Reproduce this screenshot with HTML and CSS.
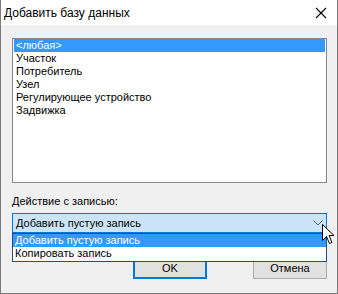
FILE: index.html
```html
<!DOCTYPE html>
<html>
<head>
<meta charset="utf-8">
<link rel="stylesheet" href="styles.css">
</head>
<body>
<div class="window">
  <div class="titlebar">
    <span class="title">Добавить базу данных</span>
    <svg class="close" width="12" height="12" viewBox="0 0 12 12"><path d="M1 1 L11 11 M11 1 L1 11" stroke="#000" stroke-width="1.1" fill="none"/></svg>
  </div>
  <div class="content">
    <div class="listbox">
      <div class="item selected">&lt;любая&gt;</div>
      <div class="item">Участок</div>
      <div class="item">Потребитель</div>
      <div class="item">Узел</div>
      <div class="item">Регулирующее устройство</div>
      <div class="item">Задвижка</div>
    </div>
    <div class="label">Действие с записью:</div>
    <div class="combo-wrap">
      <div class="combo">
        <span>Добавить пустую запись</span>
        <svg class="chev" width="10" height="6" viewBox="0 0 10 6"><path d="M0.5 0.5 L5 5 L9.5 0.5" stroke="#606060" stroke-width="1" fill="none"/></svg>
      </div>
      <div class="dropdown">
        <div class="ditem selected">Добавить пустую запись</div>
        <div class="ditem">Копировать запись</div>
      </div>
    </div>
    <div class="buttons">
      <div class="btn default">OK</div>
      <div class="btn">Отмена</div>
    </div>
  </div>
  <svg class="cursor" width="14" height="21" viewBox="0 0 14 21"><path d="M0.5 0.5 L0.5 16.5 L4.5 12.5 L7.5 19.5 L10 18.5 L7 11.5 L12 11.5 Z" fill="#fff" stroke="#000" stroke-width="1"/></svg>
</div>
</body>
</html>
```
FILE: styles.css
```css
html, body {
  margin: 0;
  padding: 0;
}
body {
  width: 338px;
  height: 294px;
  overflow: hidden;
  font-family: "Liberation Sans", Arial, sans-serif;
  font-size: 11px;
  color: #000;
}
.window {
  position: relative;
  width: 338px;
  height: 294px;
  box-sizing: border-box;
  border: 1px solid #7a7a7a;
  border-top: none;
  background: #f0f0f0;
  display: flex;
  flex-direction: column;
}
.titlebar {
  height: 25px;
  background: #fff;
  display: flex;
  align-items: center;
  justify-content: space-between;
  padding: 0 10px 0 3px;
}
.title {
  font-family: "Liberation Sans", Arial, sans-serif;
  font-size: 12px;
}
.close {
  display: block;
}
.content {
  padding: 13px 10px 0 11px;
  display: flex;
  flex-direction: column;
}
.listbox {
  height: 145px;
  box-sizing: border-box;
  border: 1px solid #828790;
  background: #fff;
  padding: 0 1px;
}
.item {
  height: 13px;
  line-height: 13px;
  padding-left: 2px;
  white-space: nowrap;
}
.item.selected {
  background: #3399ff;
  color: #fff;
}
.label {
  margin-top: 12px;
  height: 13px;
  line-height: 13px;
}
.combo-wrap {
  position: relative;
  margin-top: 5px;
}
.combo {
  height: 20px;
  box-sizing: border-box;
  border: 1px solid #0078d7;
  background: #cce4f7;
  display: flex;
  align-items: center;
  justify-content: space-between;
  padding: 0 3px 0 3px;
}
.chev {
  margin-right: 0px;
}
.dropdown {
  position: absolute;
  left: 0;
  right: 0;
  top: 20px;
  height: 29px;
  box-sizing: border-box;
  border: 1px solid #1e4f86;
  background: #fff;
  z-index: 2;
}
.ditem {
  height: 13px;
  line-height: 13px;
  padding-left: 2px;
}
.ditem.selected {
  background: #3399ff;
  color: #fff;
}
.buttons {
  margin-top: 23px;
  display: flex;
  justify-content: flex-end;
  gap: 46px;
}
.btn {
  width: 74px;
  height: 23px;
  box-sizing: border-box;
  border: 1px solid #adadad;
  background: #e1e1e1;
  display: flex;
  align-items: center;
  justify-content: center;
}
.btn.default {
  border: 2px solid #0078d7;
}
.cursor {
  position: absolute;
  left: 321px;
  top: 224px;
  z-index: 5;
}
```
